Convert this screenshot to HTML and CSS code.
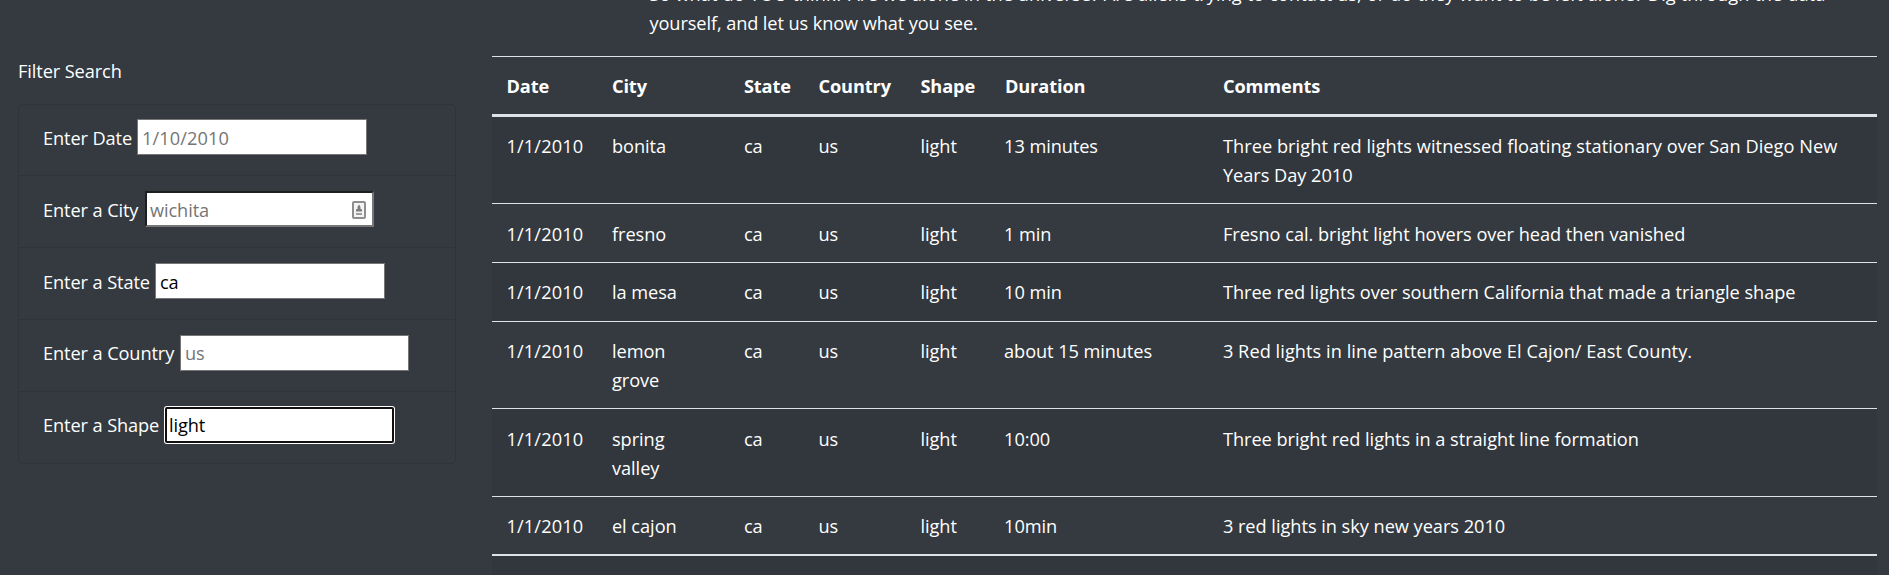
FILE: index.html
```html
<!DOCTYPE html>
<html lang="en">
<head>
<meta charset="utf-8">
<title>UFO Sightings</title>
<link rel="stylesheet" href="styles.css">
</head>
<body>
<div class="page">
  <p class="intro"><span class="intro-start">So what do YOU think? Are we alone in the universe? Are aliens trying to contact us, or do they want to be left alone? Dig through the data</span><br>yourself, and let us know what you see.</p>
  <div class="main">
    <aside class="filters">
      <p class="filters-title">Filter Search</p>
      <ul class="filter-list">
        <li class="filter"><label class="label label-date" for="date">Enter Date</label><input class="field" id="date" placeholder="1/10/2010"></li>
        <li class="filter"><label class="label label-city" for="city">Enter a City</label><span class="field-wrap"><input class="field field-inset" id="city" placeholder="wichita"><svg class="autofill" viewBox="0 0 16 20" width="16" height="20"><rect x="2" y="2" width="12" height="16" rx="1" fill="#f4f4f4" stroke="#8e8e8e" stroke-width="2"/><path d="M8 4.6 9.6 7 9.2 8.4 11 9.6V11.5H5V9.6L6.8 8.4 6.4 7Z" fill="#7c7c7c"/><path d="M5 14h6" stroke="#a0a0a0" stroke-width="2"/></svg></span></li>
        <li class="filter"><label class="label label-state" for="state">Enter a State</label><input class="field" id="state" value="ca"></li>
        <li class="filter filter-raised"><label class="label label-country" for="country">Enter a Country</label><input class="field field-country" id="country" placeholder="us"></li>
        <li class="filter filter-raised"><label class="label label-shape" for="shape">Enter a Shape</label><input class="field field-active" id="shape" value="light"></li>
      </ul>
    </aside>
    <table class="sightings">
      <colgroup><col class="c-date"><col class="c-city"><col class="c-state"><col class="c-country"><col class="c-shape"><col class="c-duration"><col></colgroup>
      <thead><tr><th>Date</th><th>City</th><th>State</th><th>Country</th><th>Shape</th><th>Duration</th><th>Comments</th></tr></thead>
      <tbody>
        <tr class="row-first"><td>1/1/2010</td><td>bonita</td><td>ca</td><td>us</td><td>light</td><td>13 minutes</td><td><span class="wide">Three bright red lights witnessed floating stationary over San Diego New</span><br>Years Day 2010</td></tr>
        <tr class="row-single row-low"><td>1/1/2010</td><td>fresno</td><td>ca</td><td>us</td><td>light</td><td>1 min</td><td>Fresno cal. bright light hovers over head then vanished</td></tr>
        <tr class="row-single"><td>1/1/2010</td><td>la mesa</td><td>ca</td><td>us</td><td>light</td><td>10 min</td><td>Three red lights over southern California that made a triangle shape</td></tr>
        <tr class="row-double"><td>1/1/2010</td><td>lemon<br>grove</td><td>ca</td><td>us</td><td>light</td><td>about 15 minutes</td><td class="wide">3 Red lights in line pattern above El Cajon/ East County.</td></tr>
        <tr class="row-tall row-low"><td>1/1/2010</td><td>spring<br>valley</td><td>ca</td><td>us</td><td>light</td><td>10:00</td><td>Three bright red lights in a straight line formation</td></tr>
        <tr class="row-last"><td>1/1/2010</td><td>el cajon</td><td>ca</td><td>us</td><td>light</td><td>10min</td><td>3 red lights in sky new years 2010</td></tr>
      </tbody>
      <tbody class="next-group"><tr><td colspan="7"></td></tr></tbody>
    </table>
  </div>
</div>
</body>
</html>
```
FILE: styles.css
```css
* { box-sizing: border-box; }
body {
  margin: 0;
  background: #343a40;
  color: #fff;
  font-family: "Open Sans", "Noto Sans", sans-serif;
  font-size: 18.2px;
  line-height: 29px;
  letter-spacing: -0.1px;
}
.page { height: 575px; overflow: hidden; }
.intro { margin: -20px 0 0 649.5px; height: 76px; white-space: nowrap; }
.intro-start { letter-spacing: 0.09px; }
.main { display: flex; align-items: flex-start; }
.filters { width: 492px; flex: none; padding: 0 36px 0 18px; }
.filters-title { margin: 1px 0 18px; }
.filter-list {
  list-style: none;
  margin: 0;
  padding: 0;
  border: 1px solid #2f343a;
  border-radius: 5px;
}
.filter {
  display: flex;
  height: 72px;
  padding: 15px 24px 0;
  border-bottom: 1px solid #2f343a;
}
.filter:first-child { height: 71px; padding-top: 14px; }
.filter:last-child { height: 71px; border-bottom: 0; }
.label { flex: none; padding-top: 5px; white-space: nowrap; }
.filter-raised .label { padding-top: 4px; }
.label-date { width: 94px; }
.label-city { width: 102px; }
.label-state { width: 112px; }
.label-country { width: 137px; }
.label-shape { width: 122px; }
.field {
  display: block;
  width: 230px;
  height: 36px;
  padding: 2px 4px 1px 4px;
  border: 1px solid #767676;
  border-radius: 0;
  background: #fff;
  color: #000;
  font: inherit;
  letter-spacing: inherit;
  outline: none;
}
.field::placeholder { color: #757575; opacity: 1; }
#date { letter-spacing: 0.1px; }
.field-country { width: 229px; padding: 1px 4px 2px; }
.field-wrap { position: relative; }
.field-inset { border: 2px solid; border-color: #1c1e20 #767676 #767676 #1c1e20; width: 229px; padding: 1px 3px 0; }
.autofill { position: absolute; right: 7px; top: 9px; }
.field-active {
  width: 229px;
  border: 2px solid #101010;
  border-radius: 2px;
  box-shadow: 0 0 0 1px #fff;
  padding: 0 2px 1px;
}
.sightings {
  width: 1385px;
  table-layout: fixed;
  border-collapse: separate;
  border-spacing: 0;
}
.c-date { width: 105.5px; }
.c-city { width: 132px; }
.c-state { width: 74.5px; }
.c-country { width: 102px; }
.c-shape { width: 84.5px; }
.c-duration { width: 218px; }
th, td {
  padding: 15px 0 0 14.4px;
  border-top: 1px solid #dee2e6;
  text-align: left;
  vertical-align: top;
  white-space: nowrap;
}
th { height: 61px; border-bottom: 3px solid #dee2e6; font-weight: 700; }
td { letter-spacing: -0.03px; }
td:first-child { letter-spacing: 0.15px; }
td:nth-child(6) { padding-left: 13.6px; letter-spacing: -0.08px; }
.wide { letter-spacing: 0.05px; }
.row-first td { height: 86px; border-top: 0; }
.row-single td { height: 59px; }
.row-double td { height: 87px; }
.row-tall td { height: 88px; }
.row-low td { padding-top: 16px; }
.row-last td { height: 58px; }
.sightings tbody tr:nth-child(odd) { background: #31373d; }
.next-group td { height: 24px; padding: 0; border-top-width: 2px; }
```
